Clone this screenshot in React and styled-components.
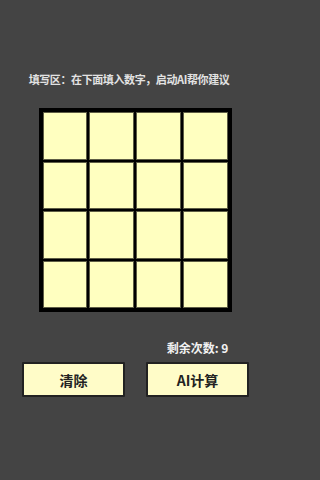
import React, { useState } from "react";
import styled, { createGlobalStyle } from "styled-components";

const GlobalStyle = createGlobalStyle`
  html, body {
    margin: 0;
    padding: 0;
    background: #444444;
  }
  body {
    font-family: "Noto Sans CJK SC", "Noto Sans", sans-serif;
  }
`;

const Page = styled.div`
  width: 270px;
  height: 480px;
  background: #444444;
  display: flex;
  flex-direction: column;
  padding-top: 72px;
  box-sizing: border-box;
`;

const Title = styled.div`
  color: #e2e2e2;
  font-size: 11px;
  font-weight: 700;
  letter-spacing: -0.4px;
  line-height: 14px;
  text-align: center;
  padding-right: 12px;
`;

const Board = styled.div`
  align-self: center;
  margin-top: 22px;
  width: 193px;
  height: 204px;
  box-sizing: border-box;
  background: #000;
  padding: 4px;
  display: grid;
  grid-template-columns: repeat(4, 1fr);
  grid-template-rows: repeat(4, 1fr);
  gap: 2px;
`;

const Cell = styled.input`
  min-width: 0;
  margin: 0;
  padding: 0;
  box-sizing: border-box;
  background: #ffffc0;
  border: 1px solid #5e5d45;
  outline: none;
  text-align: center;
  font-size: 18px;
  font-weight: 700;
  color: #222;
  font-family: inherit;
`;

const Footer = styled.div`
  margin-top: 28px;
  padding: 0 21px 0 22px;
  display: grid;
  grid-template-columns: 103px 103px;
  column-gap: 21px;
  row-gap: 6px;
`;

const Count = styled.div`
  grid-column: 2;
  color: #f2f2f2;
  font-size: 12px;
  font-weight: 700;
  line-height: 16px;
  text-align: center;
`;

const Button = styled.button`
  height: 35px;
  margin: 0;
  padding: 0;
  background: #fffcc8;
  border: 2px solid #222;
  border-radius: 1px;
  color: #222;
  font-family: inherit;
  font-size: 14px;
  font-weight: 700;
  cursor: pointer;
`;

export default function App() {
  const [cells, setCells] = useState(Array(16).fill(""));
  const [left, setLeft] = useState(9);

  const update = (i, v) => {
    const next = [...cells];
    next[i] = v.replace(/[^0-9]/g, "").slice(0, 2);
    setCells(next);
  };

  return (
    <>
      <GlobalStyle />
      <Page>
        <Title>填写区：在下面填入数字，启动AI帮你建议</Title>
        <Board>
          {cells.map((c, i) => (
            <Cell key={i} value={c} onChange={(e) => update(i, e.target.value)} />
          ))}
        </Board>
        <Footer>
          <Count>剩余次数: {left}</Count>
          <Button onClick={() => setCells(Array(16).fill(""))}>清除</Button>
          <Button onClick={() => setLeft(Math.max(0, left - 1))}>AI计算</Button>
        </Footer>
      </Page>
    </>
  );
}
